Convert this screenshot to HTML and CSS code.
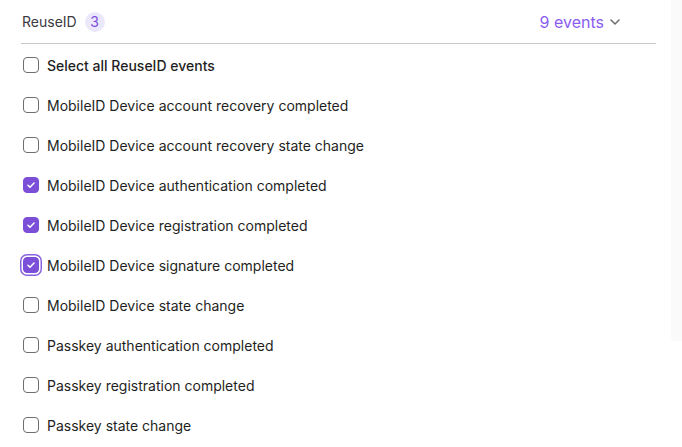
FILE: index.html
```html
<!DOCTYPE html>
<html lang="en">
<head>
<meta charset="utf-8">
<title>ReuseID events</title>
<link rel="stylesheet" href="styles.css">
</head>
<body>
<div class="page">
  <section class="panel">
    <header class="head">
      <div class="title">
        <span class="name">ReuseID</span>
        <span class="badge">3</span>
      </div>
      <button class="toggle">9 events
        <svg class="chev" width="10" height="6" viewBox="0 0 10 6"><path d="M1 1l4 4 4-4" fill="none" stroke="currentColor" stroke-width="1.5" stroke-linecap="round" stroke-linejoin="round"/></svg>
      </button>
    </header>
    <ul class="list">
      <li class="row all"><span class="box"></span><span class="label">Select all ReuseID events</span></li>
      <li class="row"><span class="box"></span><span class="label">MobileID Device account recovery completed</span></li>
      <li class="row"><span class="box"></span><span class="label">MobileID Device account recovery state change</span></li>
      <li class="row"><span class="box on"><svg viewBox="0 0 16 16"><path d="M4.5 8.3l2.3 2.2 4.7-4.8" fill="none" stroke="#fff" stroke-width="1.8" stroke-linecap="round" stroke-linejoin="round"/></svg></span><span class="label">MobileID Device authentication completed</span></li>
      <li class="row"><span class="box on"><svg viewBox="0 0 16 16"><path d="M4.5 8.3l2.3 2.2 4.7-4.8" fill="none" stroke="#fff" stroke-width="1.8" stroke-linecap="round" stroke-linejoin="round"/></svg></span><span class="label">MobileID Device registration completed</span></li>
      <li class="row"><span class="box on focus"><svg viewBox="0 0 16 16"><path d="M4.5 8.3l2.3 2.2 4.7-4.8" fill="none" stroke="#fff" stroke-width="1.8" stroke-linecap="round" stroke-linejoin="round"/></svg></span><span class="label">MobileID Device signature completed</span></li>
      <li class="row"><span class="box"></span><span class="label">MobileID Device state change</span></li>
      <li class="row"><span class="box"></span><span class="label">Passkey authentication completed</span></li>
      <li class="row"><span class="box"></span><span class="label">Passkey registration completed</span></li>
      <li class="row"><span class="box"></span><span class="label">Passkey state change</span></li>
    </ul>
  </section>
  <div class="track"></div>
</div>
</body>
</html>
```
FILE: styles.css
```css
* { box-sizing: border-box; }
html, body { margin: 0; padding: 0; background: #fff; }
body { font-family: Inter, "Noto Sans", sans-serif; color: #1f1f23; }
.page { display: flex; width: 682px; height: 447px; overflow: hidden; }
.panel { width: 635px; margin-left: 21px; flex: none; }
.track { margin-left: 15px; width: 11px; height: 341px; background: #fafafa; border-bottom-left-radius: 4px; }
.head {
  display: flex; align-items: center; justify-content: space-between;
  height: 44px; border-bottom: 1px solid #c8c8c8; padding: 0 36px 0 1px;
}
.title { display: flex; align-items: center; gap: 8px; }
.name { font-size: 14px; color: #3b3b3f; }
.badge {
  width: 20px; height: 20px; border-radius: 50%;
  background: #ece8fc; color: #7c4fe0; font-size: 14px;
  display: flex; align-items: center; justify-content: center;
}
.toggle {
  display: flex; align-items: center; gap: 6px;
  background: none; border: 0; padding: 0; font: inherit; font-size: 16px; color: #8a5cf0;
}
.chev { color: #6b6b70; margin-top: 1px; }
.list { list-style: none; margin: 0; padding: 1px 0 0; }
.row { display: flex; align-items: center; height: 40px; gap: 8px; padding-left: 2px; font-size: 14px; }
.all .label { font-weight: 500; }
.box {
  width: 16px; height: 16px; border: 1.5px solid #6e6e72; border-radius: 4px;
  display: flex; align-items: center; justify-content: center; flex: none; background: #fff;
}
.box svg { width: 16px; height: 16px; }
.box.on { background: #7b4fd8; border-color: #7b4fd8; }
.box.focus { box-shadow: 0 0 0 1.5px #fff, 0 0 0 3px #8a62e0; }
.label { color: #1f1f23; }
```
